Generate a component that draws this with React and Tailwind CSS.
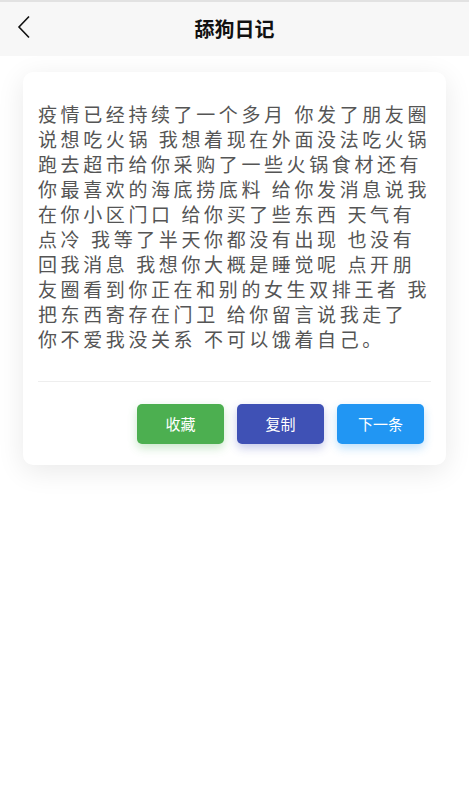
import React from "react";

const text =
  "疫情已经持续了一个多月 你发了朋友圈说想吃火锅 我想着现在外面没法吃火锅跑去超市给你采购了一些火锅食材还有你最喜欢的海底捞底料 给你发消息说我在你小区门口 给你买了些东西 天气有点冷 我等了半天你都没有出现 也没有回我消息 我想你大概是睡觉呢 点开朋友圈看到你正在和别的女生双排王者 我把东西寄存在门卫 给你留言说我走了 你不爱我没关系 不可以饿着自己。";

export default function App() {
  return (
    <div
      className="min-h-[785px] w-full bg-white"
      style={{ fontFamily: '"Noto Sans CJK SC", "Noto Sans", sans-serif' }}
    >
      {/* header */}
      <div className="h-[56px] border-t-2 border-[#e2e2e2] bg-[#f7f7f7] relative flex items-center justify-center">
        <button className="absolute left-[16px] top-[13px] w-[16px] h-[24px]" aria-label="back">
          <svg width="16" height="24" viewBox="0 0 16 24" fill="none">
            <path d="M13 1.5 L3 12 L13 22.5" stroke="#111" strokeWidth="1.6" />
          </svg>
        </button>
        <h1 className="text-[20px] font-bold text-[#111] leading-none">舔狗日记</h1>
      </div>

      {/* card */}
      <div className="px-[23px] pt-[16px]">
        <div className="bg-white rounded-[10px] shadow-[0_6px_28px_rgba(0,0,0,0.09)] px-[15px] pt-[29px] pb-[21px]">
          <p className="text-[19px] leading-[25px] tracking-[3.6px] text-[#555] break-all">{text}</p>
          <div className="mt-[30px] border-t border-[#eeeeee]" />
          <div className="mt-[22px] flex justify-end gap-[13px] pr-[7px]">
            <button className="w-[87px] h-[40px] rounded-[5px] bg-[#4caf50] text-white text-[15px] shadow-[0_4px_10px_rgba(76,175,80,0.3)]">
              收藏
            </button>
            <button className="w-[87px] h-[40px] rounded-[5px] bg-[#3f51b5] text-white text-[15px] shadow-[0_4px_10px_rgba(63,81,181,0.3)]">
              复制
            </button>
            <button className="w-[87px] h-[40px] rounded-[5px] bg-[#2196f3] text-white text-[15px] shadow-[0_4px_10px_rgba(33,150,243,0.3)]">
              下一条
            </button>
          </div>
        </div>
      </div>
    </div>
  );
}
